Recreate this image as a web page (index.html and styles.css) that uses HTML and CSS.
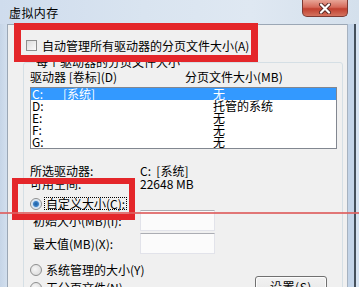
FILE: index.html
```html
<!DOCTYPE html>
<html lang="zh-CN">
<head>
<meta charset="utf-8">
<title>虚拟内存</title>
<link rel="stylesheet" href="styles.css">
</head>
<body>
<div class="window">
  <div class="titlebar">
    <span class="title">虚拟内存</span>
    <div class="close">
      <svg width="14" height="11" viewBox="0 0 14 11"><path d="M3 1.5 L11 9.5 M11 1.5 L3 9.5" stroke="#5a2a26" stroke-width="4" stroke-linecap="round"/><path d="M3 1.5 L11 9.5 M11 1.5 L3 9.5" stroke="#ffffff" stroke-width="2.2" stroke-linecap="round"/></svg>
    </div>
  </div>
  <div class="frame">
    <div class="edge-left"></div>
    <div class="panel">
      <div class="check-row">
        <span class="checkbox"></span>
        <span>自动管理所有驱动器的分页文件大小(A)</span>
      </div>
      <fieldset class="group">
        <legend>每个驱动器的分页文件大小</legend>
        <div class="list-head">
          <span>驱动器 [卷标](D)</span>
          <span>分页文件大小(MB)</span>
        </div>
        <div class="listbox">
          <div class="lrow sel"><span>C:</span><span>[系统]</span><span>无</span></div>
          <div class="lrow"><span>D:</span><span></span><span>托管的系统</span></div>
          <div class="lrow"><span>E:</span><span></span><span>无</span></div>
          <div class="lrow"><span>F:</span><span></span><span>无</span></div>
          <div class="lrow"><span>G:</span><span></span><span>无</span></div>
        </div>
        <div class="info">
          <span>所选驱动器:</span><span>C:&nbsp;&nbsp;[系统]</span>
          <span>可用空间:</span><span>22648 MB</span>
        </div>
        <div class="radio-row custom">
          <span class="radio on"></span>
          <span class="focus">自定义大小(C):</span>
        </div>
        <div class="field-row">
          <span class="flabel">初始大小(MB)(I):</span>
          <span class="input"></span>
        </div>
        <div class="field-row second">
          <span class="flabel">最大值(MB)(X):</span>
          <span class="input"></span>
        </div>
        <div class="radio-row sys">
          <span class="radio"></span>
          <span>系统管理的大小(Y)</span>
        </div>
        <div class="radio-row last">
          <span class="radio"></span>
          <span>无分页文件(N)</span>
          <span class="button">设置(S)</span>
        </div>
      </fieldset>
    </div>
    <div class="edge-right"></div>
  </div>
  <div class="mark mark-top"></div>
  <div class="mark mark-custom"></div>
  <div class="mark-line"></div>
</div>
</body>
</html>
```
FILE: styles.css
```css
html, body {
  margin: 0;
  padding: 0;
}
body {
  width: 359px;
  height: 287px;
  overflow: hidden;
  font-family: "Noto Sans CJK SC", "Liberation Sans", sans-serif;
  font-size: 12px;
  color: #000;
  background: #dbe6f2;
}
.window {
  position: relative;
  width: 359px;
  height: 287px;
  display: flex;
  flex-direction: column;
  overflow: hidden;
}
.titlebar {
  height: 24px;
  flex: 0 0 24px;
  display: flex;
  align-items: flex-start;
  background: linear-gradient(90deg, #cfdced 0%, #d9e4f0 40%, #dfe8f2 70%, #d4e0ec 100%);
}
.title {
  margin: 6px 0 0 9px;
  font-size: 12px;
  line-height: 14px;
  letter-spacing: 0.4px;
  color: #000;
}
.close {
  margin-left: auto;
  margin-right: 11px;
  width: 46px;
  height: 17px;
  box-sizing: border-box;
  border: 1px solid #7d3a33;
  border-top: none;
  border-radius: 0 0 5px 5px;
  background: linear-gradient(#e8a597 0%, #d66a5a 45%, #c1402f 55%, #d4735f 100%);
  display: flex;
  align-items: center;
  justify-content: center;
}
.close svg { display: block; }
.frame {
  flex: 1;
  display: flex;
  min-height: 0;
}
.edge-left {
  width: 7px;
  flex: 0 0 7px;
  background: linear-gradient(90deg, #c6d5e7, #d2dfee);
  border-right: 1px solid #9ba7b5;
}
.edge-right {
  width: 11px;
  flex: 0 0 11px;
  background: linear-gradient(90deg, #c3d4e8 0px, #c3d4e8 6px, #44505c 6px, #44505c 8px, #d6e3f1 8px);
  border-left: 1px solid #a6b2c0;
}
.panel {
  flex: 1;
  background: #f0f0f0;
  border-top: 1px solid #9ba7b5;
  padding: 14px 0 0 0;
  min-width: 0;
}
.check-row {
  display: flex;
  align-items: center;
  height: 13px;
  line-height: 13px;
  margin-left: 18px;
  gap: 5px;
  white-space: nowrap;
}
.checkbox {
  width: 9px;
  height: 9px;
  border: 1px solid #8e8f8f;
  background: linear-gradient(135deg, #dcdcdc, #fbfbfb);
}
.group {
  margin: 4px 0 0 15px;
  width: 320px;
  box-sizing: border-box;
  border: 1px solid #d5dfe5;
  border-radius: 3px;
  padding: 3px 6px 0 6px;
  min-width: 0;
}
.group legend {
  padding: 0 1px;
  margin-left: 5px;
  line-height: 12px;
  font-size: 12px;
}
.list-head {
  display: grid;
  grid-template-columns: 155px 1fr;
  line-height: 12px;
  height: 12px;
  white-space: nowrap;
}
.listbox {
  margin-top: 4px;
  width: 307px;
  height: 62px;
  box-sizing: border-box;
  border: 1px solid #828790;
  background: #fff;
  overflow: hidden;
}
.lrow {
  display: grid;
  grid-template-columns: 31px 150px 1fr;
  padding-left: 1px;
  height: 12px;
  line-height: 12px;
  white-space: nowrap;
}
.lrow.sel {
  background: #3399ff;
  color: #fff;
}
.info {
  margin-top: 15px;
  display: grid;
  grid-template-columns: 110px 1fr;
  grid-auto-rows: 13px;
  line-height: 13px;
  white-space: nowrap;
}
.radio-row {
  display: flex;
  align-items: center;
  height: 13px;
  line-height: 12px;
  white-space: nowrap;
}
.radio-row.custom { margin-top: 7px; }
.radio-row.sys { margin-top: 9px; }
.radio-row.last { height: 23px; }
.radio {
  width: 10px;
  height: 10px;
  border-radius: 50%;
  border: 1px solid #8e8f8f;
  background: radial-gradient(circle at 40% 40%, #f6f6f6, #d6d6d6);
  margin-right: 4px;
  flex: 0 0 auto;
}
.radio.on {
  background: radial-gradient(circle, #1d5b9e 0px, #3c82c8 2.5px, #c9dcef 3.5px, #eef3f8 5px);
}
.focus {
  border: 1px dotted #000;
  padding: 0 1px;
  margin-left: -2px;
  line-height: 11px;
}
.field-row {
  display: flex;
  align-items: center;
  height: 21px;
  white-space: nowrap;
}
.field-row.second { margin-top: 2px; }
.flabel {
  width: 107px;
  padding-left: 3px;
  line-height: 12px;
}
.input {
  width: 75px;
  height: 21px;
  box-sizing: border-box;
  border: 1px solid #e2e3ea;
  border-top-color: #abadb3;
  background: #fbfbfb;
}
.button {
  margin-left: auto;
  margin-right: 9px;
  width: 72px;
  height: 23px;
  box-sizing: border-box;
  border: 1px solid #707070;
  border-radius: 3px;
  background: linear-gradient(#f2f2f2 0%, #ebebeb 50%, #dddddd 51%, #cfcfcf 100%);
  box-shadow: inset 0 0 0 1px #fcfcfc;
  text-align: center;
  line-height: 20px;
  letter-spacing: 0.5px;
}
.mark {
  position: absolute;
  box-sizing: border-box;
  border-style: solid;
  border-color: #e4262a;
}
.mark-top {
  left: 14px;
  top: 23px;
  width: 244px;
  height: 39px;
  border-width: 7px;
}
.mark-custom {
  left: 12px;
  top: 178px;
  width: 123px;
  height: 42px;
  border-width: 6px;
}
.mark-line {
  position: absolute;
  left: 0;
  top: 212px;
  width: 359px;
  height: 2px;
  background: rgba(222, 96, 96, 0.85);
}
```
